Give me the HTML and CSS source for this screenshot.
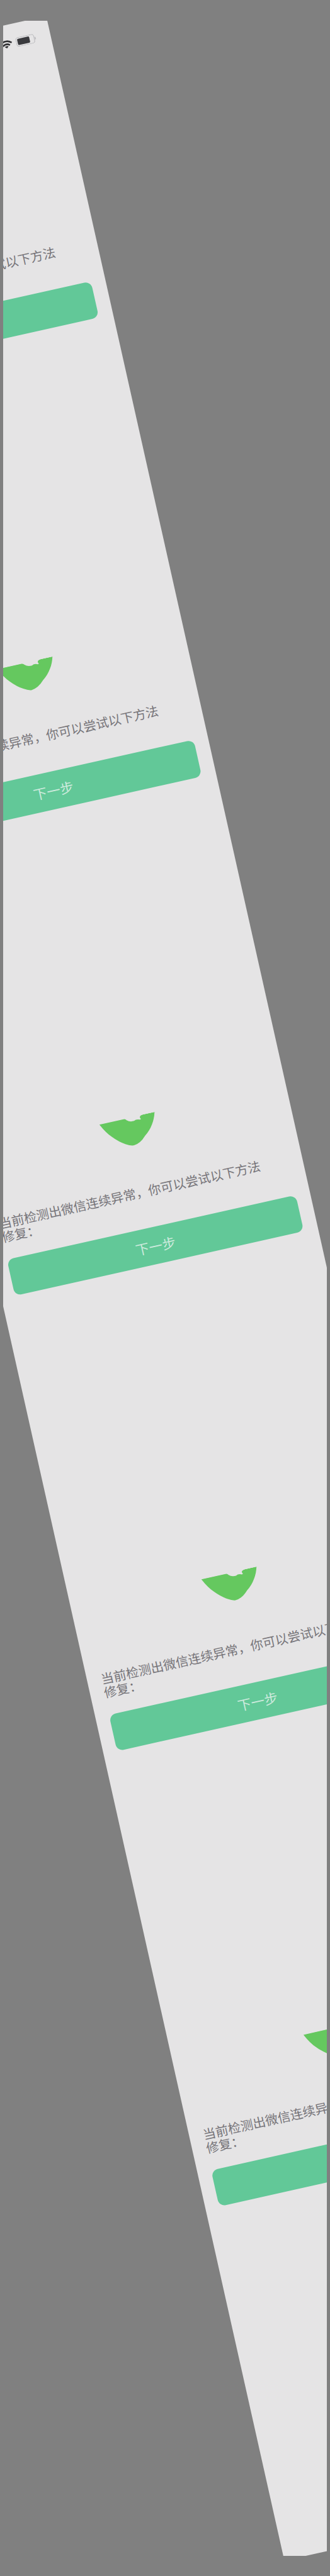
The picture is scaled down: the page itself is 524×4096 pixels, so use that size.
FILE: index.html
```html
<!DOCTYPE html>
<html lang="zh-CN">
<head>
<meta charset="utf-8">
<title>修复</title>
<link rel="stylesheet" href="styles.css">
</head>
<body>
<svg class="defs" aria-hidden="true">
  <symbol id="shield" viewBox="0 0 146 72">
    <path d="M2 1H64Q69 1 71 5Q78 12 89 11Q95 7 104 11L107 10Q101 2 114 0H144Q140 16 131 29Q122 43 108 53Q92 70 74 71Q66 70 55 63Q40 54 26 38Q14 26 2 1Z"/>
  </symbol>
</svg>
<main class="frame">
  <div class="strip">
    <section class="screen">
      <header class="top status">
        <svg class="wifi" viewBox="0 0 32 20"><path d="M1.5 8.2Q16-4 30.5 8.2M7 13.3Q16 6 25 13.3" fill="none" stroke="#303033" stroke-width="4"/><path d="M11 15.8Q16 12.8 21 15.8L16 20Z" fill="#303033"/></svg>
        <svg class="battery" viewBox="0 0 52 24"><rect x=".8" y=".8" width="46" height="22.4" rx="6" fill="none" stroke="#b4b4b8" stroke-width="1.4"/><rect x="4" y="4" width="31" height="16" rx="2.5" fill="#3a3a3e"/><path d="M49 8q3 4 0 8z" fill="#9c9ca2"/></svg>
      </header>
      <svg class="shield"><use href="#shield"/></svg>
      <p class="message">当前检测出微信连续异常，你可以尝试以下方法<br>修复：</p>
      <button class="next">下一步</button>
    </section>
    <section class="screen">
      <header class="top"></header>
      <svg class="shield"><use href="#shield"/></svg>
      <p class="message">当前检测出微信连续异常，你可以尝试以下方法<br>修复：</p>
      <button class="next">下一步</button>
    </section>
    <section class="screen">
      <header class="top"></header>
      <svg class="shield"><use href="#shield"/></svg>
      <p class="message">当前检测出微信连续异常，你可以尝试以下方法<br>修复：</p>
      <button class="next">下一步</button>
    </section>
    <section class="screen">
      <header class="top"></header>
      <svg class="shield"><use href="#shield"/></svg>
      <p class="message">当前检测出微信连续异常，你可以尝试以下方法<br>修复：</p>
      <button class="next">下一步</button>
    </section>
    <section class="screen">
      <header class="top"></header>
      <svg class="shield"><use href="#shield"/></svg>
      <p class="message">当前检测出微信连续异常，你可以尝试以下方法<br>修复：</p>
      <button class="next">下一步</button>
    </section>
  </div>
</main>
</body>
</html>
```
FILE: styles.css
```css
html {
  font-size: 6.3265px;
  background: #808080;
}

body {
  margin: 0;
  height: 4096px;
  overflow: hidden;
  background: #808080;
  font-family: "Noto Sans CJK SC", sans-serif;
}

.defs {
  display: none;
}

.frame {
  width: 81.4rem;
  height: 637.2rem;
  margin: 5.2rem auto;
  overflow: hidden;
}

.strip {
  width: 81.4rem;
  height: 637.2rem;
  background: #e5e4e5;
  transform: rotate(-12.62deg);
}

.screen {
  display: flex;
  flex-direction: column;
  box-sizing: border-box;
  height: 117.24rem;
  padding: 0 3.6rem 0 3.5rem;
}

.top {
  display: flex;
  flex: none;
  justify-content: flex-end;
  gap: 1rem;
  box-sizing: border-box;
  height: 40.2rem;
}

.status {
  height: 39.25rem;
  padding-top: 3.65rem;
}

.wifi {
  width: 3.2rem;
  height: 2rem;
  margin-top: 0.15rem;
}

.battery {
  width: 5.2rem;
  height: 2.4rem;
}

.shield {
  flex: none;
  align-self: center;
  width: 14.6rem;
  height: 7.2rem;
  fill: #65c85f;
}

.message {
  flex: none;
  margin: 10.1rem 0 3.9rem;
  color: #77757a;
  font-size: 3.2rem;
  line-height: 3.5rem;
  white-space: nowrap;
}

.next {
  flex: none;
  height: 9.35rem;
  padding: 0;
  border: 0;
  border-radius: 1.7rem;
  background: #62c898;
  color: #cdeadd;
  font-family: inherit;
  font-size: 3.4rem;
  line-height: 1;
}
```
